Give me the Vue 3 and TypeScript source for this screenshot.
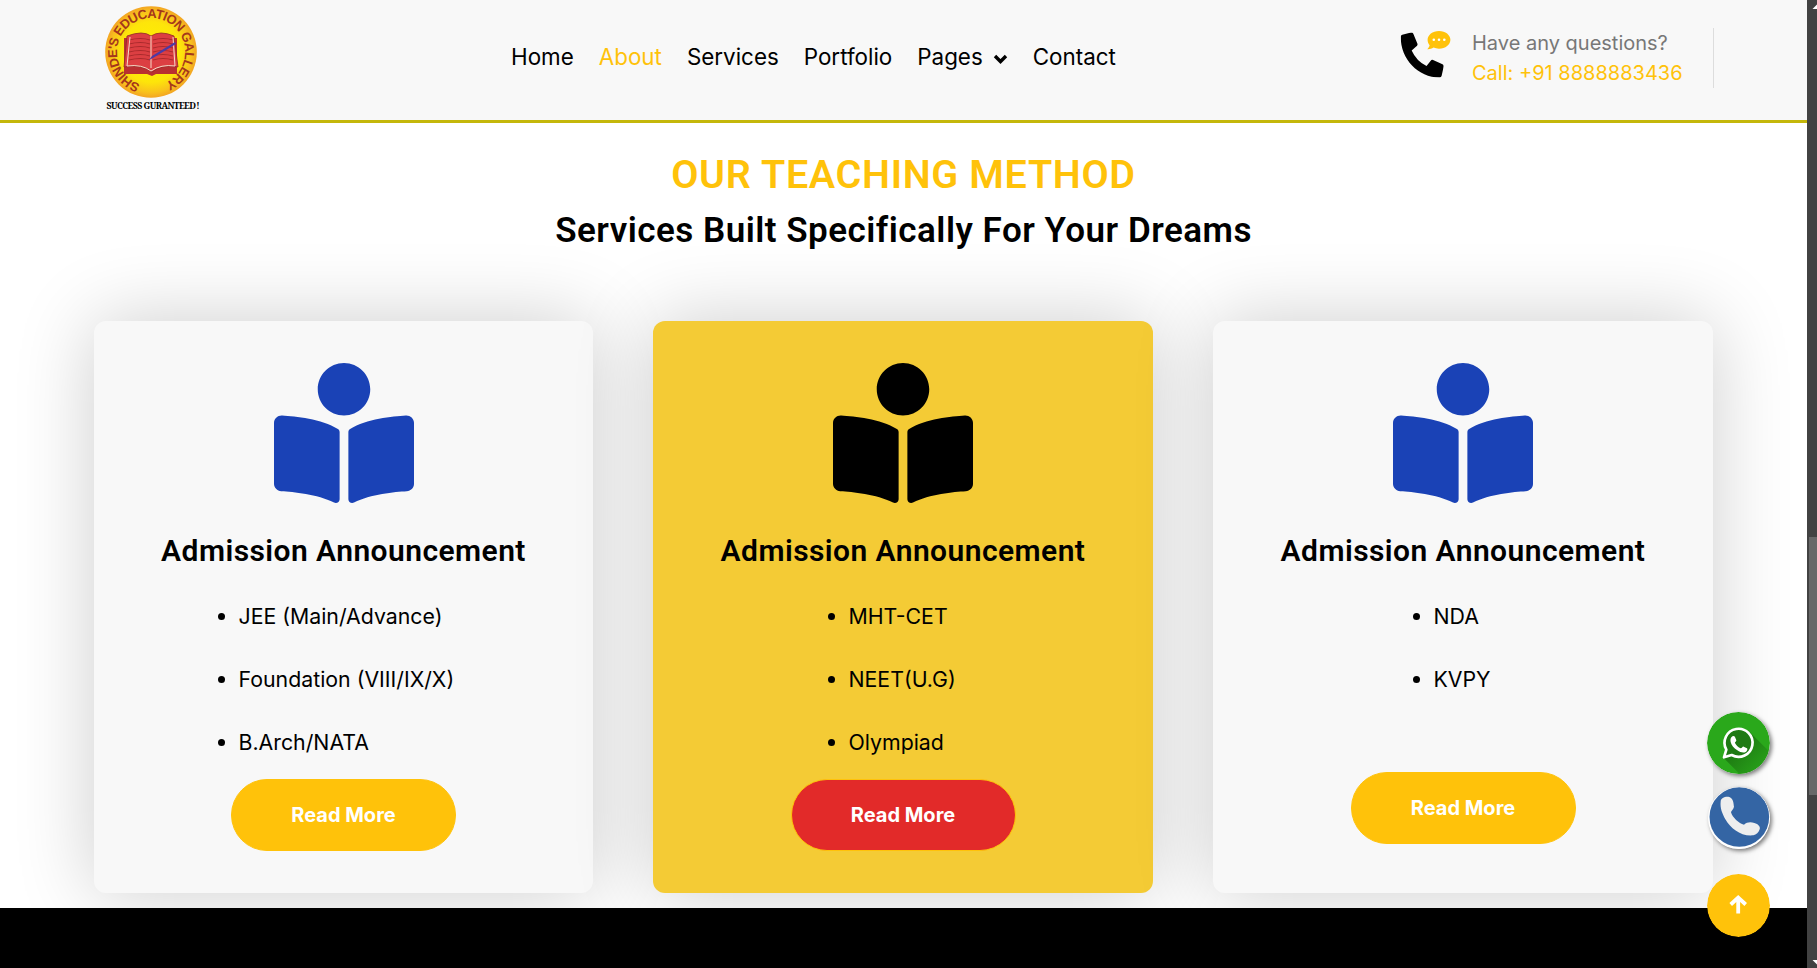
<script setup lang="ts">
interface NavItem {
  label: string
  active?: boolean
  menu?: boolean
}

interface Course {
  title: string
  items: string[]
  variant: string
}

const nav: NavItem[] = [
  { label: 'Home' },
  { label: 'About', active: true },
  { label: 'Services' },
  { label: 'Portfolio' },
  { label: 'Pages', menu: true },
  { label: 'Contact' },
]

const courses: Course[] = [
  { title: 'Admission Announcement', items: ['JEE (Main/Advance)', 'Foundation (VIII/IX/X)', 'B.Arch/NATA'], variant: 'first' },
  { title: 'Admission Announcement', items: ['MHT-CET', 'NEET(U.G)', 'Olympiad'], variant: 'featured' },
  { title: 'Admission Announcement', items: ['NDA', 'KVPY'], variant: 'short' },
]
</script>

<template>
  <div class="page">
    <div class="content">
      <header class="header">
        <div class="logo">
          <svg class="emblem" viewBox="0 0 94 94">
            <defs>
              <radialGradient id="gold">
                <stop offset="0" stop-color="#fff200" />
                <stop offset="0.66" stop-color="#fde50a" />
                <stop offset="0.88" stop-color="#f9c21c" />
                <stop offset="1" stop-color="#f3a524" />
              </radialGradient>
              <path id="ring" d="M36.4 79.3 A34 34 0 1 1 58.6 79" />
            </defs>
            <circle cx="47" cy="47" r="45.8" fill="url(#gold)" />
            <path d="M20 33h53v36H52l-4 2-5-2H20z" fill="#b92f31" />
            <path d="M23 31q16-6 24 0q9-6 23 0l4 31q-16-3-26 5q-10-8-28-5z" fill="#dc3f42" stroke="#8f2927" stroke-width="0.8" />
            <path d="M25 35q12-3 21 0M25 39q12-3 21 0M25 43q12-3 21 0M25 47q12-3 21 0M25 51q12-3 21 0M25 55q12-3 21 0M49 35q10-3 20 0M49 39q10-3 20 0M49 43q10-3 20 0M49 47q10-3 20 0M49 51q10-3 20 0M49 55q10-3 20 0" fill="none" stroke="#a92a2c" stroke-width="1.1" />
            <path d="M26 32L23 61q15-2 24 5q10-7 24-5L69 32M47 31v32" fill="none" stroke="#f6dcc8" stroke-width="1" />
            <path d="M45 55l3-4L71 37l1 2-23 14z" fill="#4d3aa5" />
            <text class="ring-text" textLength="188"><textPath href="#ring" textLength="188">SHINDE'S EDUCATION GALLERY</textPath></text>
          </svg>
          <div class="motto">SUCCESS GURANTEED&thinsp;!</div>
        </div>
        <nav class="nav">
          <a v-for="item in nav" :key="item.label" class="nav-link" :class="{ active: item.active }">
            {{ item.label }}
            <svg v-if="item.menu" class="chevron" viewBox="0 0 15 10"><path d="M2 2l5.5 5.5L13 2" /></svg>
          </a>
        </nav>
        <div class="contact">
          <svg class="call-icon" viewBox="0 0 50 48">
            <svg x="0.7" y="2.5" width="43" height="45" viewBox="0 0 512 512" preserveAspectRatio="none">
              <path d="M497.39 361.8l-112-48a24 24 0 0 0-28 6.9l-49.6 60.6A370.66 370.66 0 0 1 130.6 204.11l60.6-49.6a23.94 23.94 0 0 0 6.9-28l-48-112A24.16 24.16 0 0 0 122.6.61l-104 24A24 24 0 0 0 0 48c0 256.5 207.9 464 464 464a24 24 0 0 0 23.4-18.6l24-104a24.29 24.29 0 0 0-14.01-27.6z" />
            </svg>
            <path d="M39 0.9c6.500 0 11.400 3.900 11.400 8.900s-4.900 8.900-11.400 8.900c-2 0-3.900-.4-5.500-1.100-1.700 1.100-4 1.900-6.200 1.700 1.200-1.200 2.100-2.600 2.300-4-1.300-1.500-2-3.400-2-5.500C27.600 4.800 32.500.9 39 .9z" fill="#ffc20a" />
            <g fill="#fff"><circle cx="33.800" cy="9.800" r="1.300" /><circle cx="39" cy="9.800" r="1.300" /><circle cx="44.300" cy="9.800" r="1.300" /></g>
          </svg>
          <div class="contact-text">
            <span class="question">Have any questions?</span>
            <span class="phone">Call: +91 8888883436</span>
          </div>
        </div>
      </header>

      <main class="section">
        <h3 class="eyebrow">OUR TEACHING METHOD</h3>
        <h2 class="headline">Services Built Specifically For Your Dreams</h2>
        <div class="cards">
          <article v-for="course in courses" :key="course.variant" class="card" :class="course.variant">
            <svg class="reader" viewBox="0 0 512 512">
              <path d="M352 96c0-53.02-42.98-96-96-96s-96 42.98-96 96 42.98 96 96 96 96-42.98 96-96zM233.59 241.1c-59.33-36.32-155.43-46.3-203.79-49.05C13.55 191.13 0 203.51 0 219.14v222.8c0 14.33 11.59 26.28 26.49 27.05 43.66 2.29 131.99 10.68 193.04 41.43 9.37 4.72 20.48-1.71 20.48-11.87V252.56c-.01-4.67-2.32-8.95-6.42-11.46zm248.61-49.05c-48.35 2.74-144.46 12.73-203.78 49.05-4.1 2.51-6.41 6.96-6.41 11.63v245.79c0 10.19 11.14 16.63 20.54 11.9 61.04-30.72 149.32-39.11 192.97-41.4 14.9-.78 26.49-12.73 26.49-27.06V219.14c-.01-15.63-13.56-28.01-29.8-27.09z" />
            </svg>
            <h4 class="card-title">{{ course.title }}</h4>
            <ul class="list">
              <li v-for="entry in course.items" :key="entry">{{ entry }}</li>
            </ul>
            <a class="button">Read More</a>
          </article>
        </div>
      </main>
      <footer class="footer"></footer>
    </div>

    <div class="scrollbar">
      <svg class="tip" viewBox="0 0 10 10"><path d="M10 4.500L5.500 9H10z" fill="#fff" /></svg>
      <div class="thumb"></div>
      <svg class="tip" viewBox="0 0 10 10"><path d="M5.500 2H10v4.500z" fill="#fff" /></svg>
    </div>

    <div class="floating">
      <svg class="round whatsapp" viewBox="0 0 189 186">
        <defs>
          <linearGradient id="cast" x1="0" y1="0" x2="1" y2="1">
            <stop offset="0.2" stop-color="#1c7411" />
            <stop offset="0.85" stop-color="#2aa81b" />
          </linearGradient>
          <clipPath id="disc"><ellipse cx="94.500" cy="93" rx="94.500" ry="93" /></clipPath>
        </defs>
        <g clip-path="url(#disc)">
          <rect width="189" height="186" fill="#2aa81b" />
          <path d="M50 138L128 60L200 132L120 208z" fill="url(#cast)" />
        </g>
        <path d="M51 136l7-23a42 42 0 1 1 16 16z" fill="#1f7a14" stroke="#fff" stroke-width="8" stroke-linejoin="round" />
        <path d="M73 76c4-5 9-5 11-1l4 10c1 3-5 6-4 8 4 8 10 13 17 16 3 1 6-7 9-5l10 5c3 2 0 9-4 11-7 4-16 1-25-5C80 108 73 99 71 90c-1-5-1-10 2-14z" fill="#fff" />
      </svg>
      <svg class="round dial" viewBox="82 262 186 186">
        <circle cx="175" cy="355" r="93" fill="#fff" />
        <circle cx="176" cy="352" r="89.500" fill="#3465a4" />
        <path d="M120 306c0-13 22-19 31-11c8 7 8 21 9 26c-1 8-9 12-9 17c4 15 24 34 39 37c9-8 20-9 31-5c12 3 19 12 16 19c-3 10-10 16-19 18c-38 4-68-22-83-47c-11-19-17-36-15-54z" fill="#eee" />
      </svg>
      <svg class="round top" viewBox="0 0 63 63">
        <circle cx="31.500" cy="31.500" r="31.500" fill="#ffc20a" />
        <path d="M31.200 39.500V25M23.700 30.500l7.500-7 7.500 7" fill="none" stroke="#fff" stroke-width="3.800" />
      </svg>
    </div>
  </div>
</template>

<style>
body {
  margin: 0;
  overflow: hidden;
}
</style>

<style scoped>
.page {
  width: 1817px;
  height: 968px;
  display: flex;
  position: relative;
  overflow: hidden;
  background: #fff;
  color: #000;
  font-family: Inter, "Liberation Sans", sans-serif;
}
.content {
  width: 1807px;
  display: flex;
  flex-direction: column;
  overflow: hidden;
}
.header {
  box-sizing: border-box;
  height: 123px;
  flex: none;
  display: flex;
  background: #f8f8f8;
  border-bottom: 3px solid #c4b70a;
}
.logo {
  width: 94px;
  margin-left: 104px;
  padding-top: 5px;
}
.emblem {
  width: 94px;
  height: 94px;
  display: block;
}
.ring-text {
  font: bold 13px "Liberation Sans", sans-serif;
  fill: #a5371b;
}
.motto {
  font: bold 8.8px/12px "Noto Serif", "Liberation Serif", serif;
  letter-spacing: -0.58px;
  white-space: nowrap;
  margin: 1px 0 0 2.500px;
}
.nav {
  width: 640px;
  margin-left: 313px;
  height: 113px;
  display: flex;
  align-items: center;
  gap: 25px;
  font-size: 22.4px;
}
.nav-link {
  display: flex;
  align-items: center;
  white-space: nowrap;
}
.active {
  color: #ffc20a;
}
.chevron {
  width: 15px;
  height: 10px;
  margin: 4px 0 0 10px;
  fill: none;
  stroke: #000;
  stroke-width: 3.4;
}
.contact {
  box-sizing: border-box;
  display: flex;
  margin: 28px 0 0 auto;
  margin-right: 93px;
  width: 314px;
  height: 60px;
  border-right: 1px solid #ddd;
}
.call-icon {
  width: 50px;
  height: 48px;
  margin-top: 2px;
  overflow: visible;
}
.contact-text {
  display: flex;
  flex-direction: column;
  margin-left: 22px;
  font-size: 20px;
  line-height: 30px;
  white-space: nowrap;
}
.question {
  color: #777;
}
.phone {
  color: #ffc20a;
}
.section {
  height: 785px;
  flex: none;
  display: flex;
  flex-direction: column;
  align-items: center;
  overflow: hidden;
}
.eyebrow,
.headline,
.card-title {
  margin: 0;
  font-family: Roboto, "Liberation Sans", sans-serif;
  font-weight: 600;
  white-space: nowrap;
}
.eyebrow {
  margin-top: 28px;
  font-size: 39.500px;
  line-height: 48px;
  letter-spacing: 0.66px;
  color: #ffc20a;
}
.headline {
  margin-top: 10px;
  font-size: 35px;
  line-height: 44px;
  letter-spacing: 0.48px;
}
.cards {
  display: flex;
  gap: 60px;
  margin-top: 68px;
}
.card {
  box-sizing: border-box;
  width: 500px;
  height: 572px;
  padding-top: 42px;
  display: flex;
  flex-direction: column;
  align-items: center;
  border-radius: 12px;
  background: #f8f8f8;
  box-shadow: 0 0 80px rgba(0, 0, 0, 0.2);
}
.first {
  width: 499px;
}
.featured {
  background: #f4cb35;
}
.reader {
  width: 140px;
  height: 140px;
  flex: none;
  fill: #1a42b6;
}
.featured .reader {
  fill: #000;
}
.card-title {
  margin-top: 28px;
  font-size: 30px;
  line-height: 40px;
  letter-spacing: 0.44px;
}
.list {
  align-self: stretch;
  box-sizing: border-box;
  height: 194px;
  margin: 14px 0 0;
  padding: 0 0 0 144.500px;
  font-size: 21.3px;
  line-height: 63px;
}
.featured .list {
  padding-left: 195.500px;
}
.short .list {
  height: 187px;
  padding-left: 220.500px;
}
.button {
  box-sizing: border-box;
  width: 225px;
  height: 72px;
  border: 1px solid #ffc20a;
  border-radius: 36px;
  background: #ffc20a;
  color: #fff;
  font-size: 20px;
  font-weight: 700;
  line-height: 70px;
  text-align: center;
}
.featured .button {
  background: #e22a29;
}
.footer {
  flex: 1;
  background: #000;
}
.scrollbar {
  width: 10px;
  height: 968px;
  display: flex;
  flex-direction: column;
  background: #424242;
}
.tip {
  width: 10px;
  height: 10px;
}
.thumb {
  width: 8px;
  height: 258px;
  margin: 527px 0 163px 2px;
  background: #686868;
}
.floating {
  position: absolute;
  left: 1707px;
  top: 712px;
  display: flex;
  flex-direction: column;
  align-items: center;
}
.round {
  display: block;
  border-radius: 50%;
}
.whatsapp {
  width: 63px;
  height: 62px;
  box-shadow: 2px 2px 4px rgba(0, 0, 0, 0.5);
}
.dial {
  width: 62px;
  height: 62px;
  margin-top: 13px;
  box-shadow: 2px 2px 4px rgba(0, 0, 0, 0.5);
}
.top {
  width: 63px;
  height: 63px;
  margin-top: 25px;
}
</style>
